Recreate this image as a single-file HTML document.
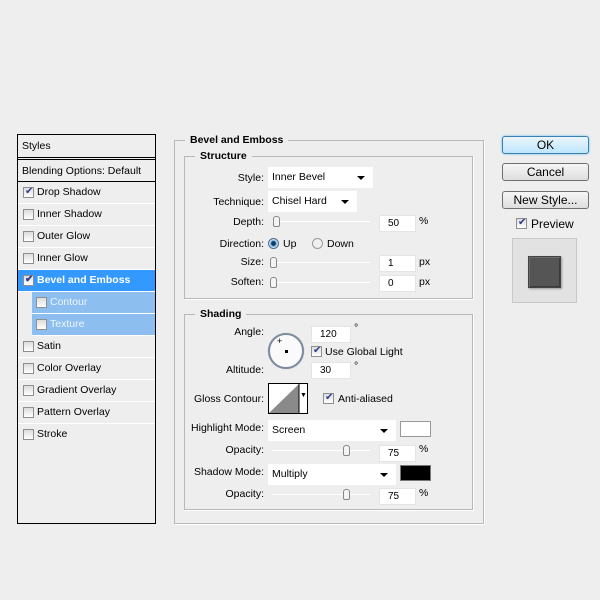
<!DOCTYPE html><html><head><style>
body{margin:0;width:600px;height:600px;background:#eeeeee;font-family:"Liberation Sans",sans-serif;font-size:10.5px;color:#000;position:relative;overflow:hidden}
div,span{position:absolute;box-sizing:border-box}
.t{white-space:nowrap;line-height:12px}
.cb{width:11px;height:11px;border:1px solid #8f8f8f;background:linear-gradient(#dcdcdc,#fff)}
.ck::after{content:"✔";position:absolute;left:1px;top:-2px;font-size:10px;color:#2a3d8f}
.row{left:18px;width:137px;height:22px;border-bottom:1px solid #fff}
.in{background:#fff;height:17px;border:1px solid #e4e4e4;padding:2px 0 0 8px;font-size:10px}
.sel{background:#fff;height:21px;padding:4px 0 0 4px}
.sel::after{content:"";position:absolute;right:8px;top:9px;border:4px solid transparent;border-top:4px solid #000;border-bottom:0}
.trk{height:1px;background:#aaa;border-bottom:1px solid #fff}
.th{width:7px;height:11px;border:1px solid #888;border-radius:3px 3px 2px 2px;background:#f4f4f4}
.btn{left:502px;width:87px;height:18px;border:1px solid #707070;border-radius:3px;background:linear-gradient(#f6f6f6,#dedede);text-align:center;font-size:12px;line-height:16px}
.fs{border:1px solid #b8b8b8;box-shadow:1px 1px 0 #fff}
.lg{background:#eeeeee;font-weight:bold;padding:0 5px}
.r{text-align:right}
</style></head><body>
<!-- left panel -->
<div style="left:17px;top:134px;width:139px;height:390px;border:1px solid #000;background:#eeeeee"></div>
<div style="left:18px;top:157px;width:137px;height:3px;border-top:1px solid #000;border-bottom:1px solid #000"></div>
<div style="left:18px;top:181px;width:137px;height:1px;background:#000"></div>
<div class="t" style="left:22px;top:140px">Styles</div>
<div class="t" style="left:22px;top:165px">Blending Options: Default</div>
<div class="row" style="top:182px"><span class="cb ck" style="left:5px;top:5px"></span><span class="t" style="left:19px;top:4px">Drop Shadow</span></div>
<div class="row" style="top:204px"><span class="cb" style="left:5px;top:5px"></span><span class="t" style="left:19px;top:4px">Inner Shadow</span></div>
<div class="row" style="top:226px"><span class="cb" style="left:5px;top:5px"></span><span class="t" style="left:19px;top:4px">Outer Glow</span></div>
<div class="row" style="top:248px"><span class="cb" style="left:5px;top:5px"></span><span class="t" style="left:19px;top:4px">Inner Glow</span></div>
<div class="row" style="top:270px;background:#3399ff;color:#fff;font-weight:bold"><span class="cb ck" style="left:5px;top:5px"></span><span class="t" style="left:19px;top:4px">Bevel and Emboss</span></div>
<div class="row" style="top:292px;left:32px;width:123px;background:#8cbff0;color:#eef5ff"><span class="cb" style="left:4px;top:5px"></span><span class="t" style="left:18px;top:4px">Contour</span></div>
<div class="row" style="top:314px;left:32px;width:123px;background:#8cbff0;color:#eef5ff"><span class="cb" style="left:4px;top:5px"></span><span class="t" style="left:18px;top:4px">Texture</span></div>
<div class="row" style="top:336px"><span class="cb" style="left:5px;top:5px"></span><span class="t" style="left:19px;top:4px">Satin</span></div>
<div class="row" style="top:358px"><span class="cb" style="left:5px;top:5px"></span><span class="t" style="left:19px;top:4px">Color Overlay</span></div>
<div class="row" style="top:380px"><span class="cb" style="left:5px;top:5px"></span><span class="t" style="left:19px;top:4px">Gradient Overlay</span></div>
<div class="row" style="top:402px"><span class="cb" style="left:5px;top:5px"></span><span class="t" style="left:19px;top:4px">Pattern Overlay</span></div>
<div class="row" style="top:424px;border:0"><span class="cb" style="left:5px;top:5px"></span><span class="t" style="left:19px;top:4px">Stroke</span></div>

<!-- frames -->
<div class="fs" style="left:174px;top:140px;width:310px;height:384px"></div>
<div class="t lg" style="left:185px;top:134px">Bevel and Emboss</div>
<div class="fs" style="left:184px;top:156px;width:289px;height:143px"></div>
<div class="t lg" style="left:195px;top:150px">Structure</div>
<div class="fs" style="left:184px;top:314px;width:289px;height:196px"></div>
<div class="t lg" style="left:195px;top:308px">Shading</div>

<!-- structure -->
<div class="t r" style="left:200px;width:64px;top:172px">Style:</div>
<div class="sel" style="left:268px;top:167px;width:105px">Inner Bevel</div>
<div class="t r" style="left:200px;width:64px;top:196px">Technique:</div>
<div class="sel" style="left:268px;top:191px;width:89px">Chisel Hard</div>
<div class="t r" style="left:200px;width:64px;top:216px">Depth:</div>
<div class="trk" style="left:272px;top:221px;width:98px"></div><div class="th" style="left:273px;top:216px"></div>
<div class="in" style="left:379px;top:215px;width:37px">50</div><div class="t" style="left:419px;top:215px">%</div>
<div class="t r" style="left:200px;width:64px;top:238px">Direction:</div>
<div style="left:268px;top:238px;width:11px;height:11px;border-radius:50%;border:1px solid #4a6a8a;background:radial-gradient(#0a3d6e 30%,#7fb0dc 45%,#e8f2fa 70%)"></div>
<div class="t" style="left:283px;top:238px">Up</div>
<div style="left:312px;top:238px;width:11px;height:11px;border-radius:50%;border:1px solid #999;background:#f0f0f0"></div>
<div class="t" style="left:327px;top:238px">Down</div>
<div class="t r" style="left:200px;width:64px;top:256px">Size:</div>
<div class="trk" style="left:270px;top:262px;width:100px"></div><div class="th" style="left:270px;top:257px"></div>
<div class="in" style="left:379px;top:255px;width:37px">1</div><div class="t" style="left:419px;top:256px">px</div>
<div class="t r" style="left:200px;width:64px;top:276px">Soften:</div>
<div class="trk" style="left:270px;top:282px;width:100px"></div><div class="th" style="left:270px;top:277px"></div>
<div class="in" style="left:379px;top:275px;width:37px">0</div><div class="t" style="left:419px;top:276px">px</div>

<!-- shading -->
<div class="t r" style="left:190px;width:74px;top:326px">Angle:</div>
<div style="left:268px;top:333px;width:36px;height:36px;border-radius:50%;border:2px solid #7c8ca0;background:#fafafa;box-shadow:0 0 1px #aaa"></div>
<div class="t" style="left:277px;top:335px;font-size:9px">+</div>
<div style="left:285px;top:350px;width:3px;height:3px;background:#000"></div>
<div class="in" style="left:311px;top:326px;width:40px">120</div><div class="t" style="left:354px;top:322px">°</div>
<div class="cb ck" style="left:311px;top:346px"></div><div class="t" style="left:325px;top:346px">Use Global Light</div>
<div class="t r" style="left:190px;width:74px;top:364px">Altitude:</div>
<div class="in" style="left:311px;top:362px;width:40px">30</div><div class="t" style="left:354px;top:360px">°</div>
<div class="t r" style="left:190px;width:74px;top:393px">Gloss Contour:</div>
<div style="left:268px;top:383px;width:40px;height:31px;border:1px solid #000;background:#fff;overflow:hidden">
<svg width="40" height="31" style="position:absolute;left:0;top:0"><polygon points="0,29 30,0 30,31 0,31" fill="#8a8a8a"/><line x1="30" y1="0" x2="30" y2="31" stroke="#000"/></svg>
<span class="t" style="left:31px;top:6px;font-size:7px">▼</span></div>
<div class="cb ck" style="left:323px;top:393px"></div><div class="t" style="left:338px;top:393px">Anti-aliased</div>
<div class="t r" style="left:190px;width:74px;top:422px">Highlight Mode:</div>
<div class="sel" style="left:268px;top:420px;width:128px">Screen</div>
<div style="left:400px;top:421px;width:31px;height:16px;border:1px solid #999;background:#fff"></div>
<div class="t r" style="left:190px;width:74px;top:444px">Opacity:</div>
<div class="trk" style="left:272px;top:450px;width:98px"></div><div class="th" style="left:343px;top:445px"></div>
<div class="in" style="left:379px;top:445px;width:37px">75</div><div class="t" style="left:419px;top:443px">%</div>
<div class="t r" style="left:190px;width:74px;top:466px">Shadow Mode:</div>
<div class="sel" style="left:268px;top:464px;width:128px">Multiply</div>
<div style="left:400px;top:465px;width:31px;height:16px;border:1px solid #777;background:#000"></div>
<div class="t r" style="left:190px;width:74px;top:488px">Opacity:</div>
<div class="trk" style="left:272px;top:494px;width:98px"></div><div class="th" style="left:343px;top:489px"></div>
<div class="in" style="left:379px;top:488px;width:37px">75</div><div class="t" style="left:419px;top:487px">%</div>

<!-- buttons -->
<div class="btn" style="top:136px;border-color:#3c7fb1;background:linear-gradient(#eaf6fd,#bee6fd);box-shadow:0 0 2px #5bc0f0">OK</div>
<div class="btn" style="top:163px">Cancel</div>
<div class="btn" style="top:191px">New Style...</div>
<div class="cb ck" style="left:516px;top:218px"></div><div class="t" style="left:531px;top:217px;font-size:12px;line-height:14px">Preview</div>
<div style="left:512px;top:238px;width:65px;height:65px;border:1px solid #c8c8c8;background:#e2e2e2"></div>
<div style="left:528px;top:256px;width:33px;height:32px;background:#555;border:1px solid #444;box-shadow:inset 1px 1px 0 #6a6a6a,inset -1px -1px 0 #3a3a3a,1px 1px 2px #999"></div>
</body></html>
